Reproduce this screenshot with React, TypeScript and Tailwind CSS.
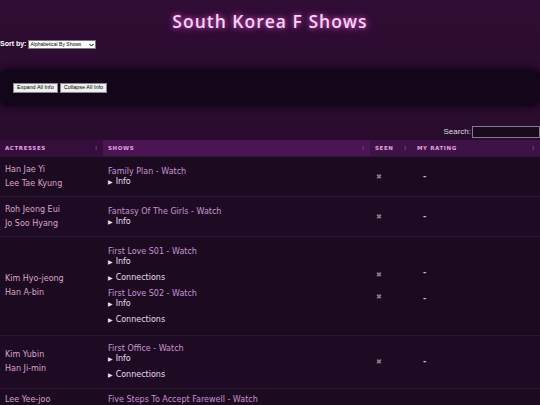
import React from "react";

type Show = { title: string; connections?: boolean };
type Row = { actresses: string[]; shows: Show[]; h: string; top?: boolean };

const rows: Row[] = [
  { actresses: ["Han Jae Yi", "Lee Tae Kyung"], shows: [{ title: "Family Plan" }], h: "h-[40px]" },
  { actresses: ["Roh Jeong Eui", "Jo Soo Hyang"], shows: [{ title: "Fantasy Of The Girls" }], h: "h-[40px]" },
  {
    actresses: ["Kim Hyo-jeong", "Han A-bin"],
    shows: [
      { title: "First Love S01", connections: true },
      { title: "First Love S02", connections: true },
    ],
    h: "h-[99px]",
  },
  { actresses: ["Kim Yubin", "Han Ji-min"], shows: [{ title: "First Office", connections: true }], h: "h-[53px]" },
  { actresses: ["Lee Yee-joo"], shows: [{ title: "Five Steps To Accept Farewell" }], h: "h-[56px]", top: true },
];

function SortIcon() {
  return <span className="text-[6px] leading-none text-[#7a4a80]">⁝</span>;
}

function Disclosure({ label }: { label: string }) {
  return (
    <div className="flex items-center gap-[3px] text-[8px] leading-[10px] text-[#eadcf0]">
      <span className="text-[6px]">▶</span>
      <span>{label}</span>
    </div>
  );
}

export default function App() {
  const font = { fontFamily: '"DejaVu Sans", Verdana, sans-serif' };
  const arial = { fontFamily: '"Liberation Sans", Arial, sans-serif' };
  return (
    <div
      className="w-[540px] h-[405px] overflow-hidden bg-gradient-to-b from-[#300d34] via-[#250b2a] to-[#1b0a1f]"
      style={font}
    >
      <h1
        className="pt-[8px] h-[36px] text-center text-[17.5px] font-semibold tracking-[1px] text-[#f4d4f0] [text-shadow:0_0_5px_#c048b8,0_0_10px_#8a2484]"
        style={{ fontFamily: '"Open Sans", "DejaVu Sans", sans-serif' }}
      >
        South Korea F Shows
      </h1>
      <div className="flex items-center gap-[2px] h-[17px]" style={arial}>
        <span className="text-[7px] font-bold text-white">Sort by:</span>
        <div className="relative flex">
          <select className="appearance-none h-[9px] w-[68px] bg-white text-black text-[5px] border border-[#777] pl-[1px] pr-[6px] leading-none">
            <option>Alphabetical By Shows</option>
          </select>
          <svg className="absolute right-[2px] top-[2.5px] w-[5px] h-[4px]" viewBox="0 0 10 8">
            <path d="M1 2 L5 6 L9 2" fill="none" stroke="#000" strokeWidth="2" />
          </svg>
        </div>
      </div>
      <div
        className="mt-[16px] h-[37px] rounded-[8px] bg-[#13061a] flex items-center px-[13px] gap-[2px] shadow-[0_0_8px_#0d0410]"
        style={arial}
      >
        <button className="h-[10px] px-[3px] bg-[#efefef] border border-[#888] text-[5.5px] text-black leading-none">Expand All Info</button>
        <button className="h-[10px] px-[3px] bg-[#efefef] border border-[#888] text-[5.5px] text-black leading-none">Collapse All Info</button>
      </div>
      <div className="flex justify-end items-center gap-[1px] mt-[19px] h-[13px]" style={arial}>
        <span className="text-[8px] text-[#ddd]">Search:</span>
        <input className="w-[68px] h-[12px] border border-[#8a7a90] bg-[#1a0a20]" />
      </div>
      <div className="mt-[2px] grid grid-cols-[103px_267px_42px_128px] h-[16px] text-[5.5px] font-bold tracking-[0.6px] text-[#e6a4e2] bg-[#360f3d]">
        <div className="flex items-center justify-between px-[5px] bg-[#350e3c]">ACTRESSES<SortIcon /></div>
        <div className="flex items-center justify-between px-[5px] bg-[#4b1554]">SHOWS<SortIcon /></div>
        <div className="flex items-center justify-between px-[5px] bg-[#3e1246]">SEEN<SortIcon /></div>
        <div className="flex items-center justify-between px-[5px] bg-[#3e1246]">MY RATING<SortIcon /></div>
      </div>
      {rows.map((r, i) => (
        <div
          key={i}
          className={`grid grid-cols-[103px_267px_42px_128px] border-t border-[#2e1436] ${r.h} ${i % 2 === 0 ? "bg-[#1c0a21]" : "bg-[#1e0b23]"}`}
        >
          <div
            className={`flex flex-col gap-[4px] px-[5px] text-[8px] leading-[10px] text-[#dba4cc] ${r.top ? "justify-start pt-[6px]" : "justify-center"}`}
          >
            {r.actresses.map((a) => (
              <div key={a}>{a}</div>
            ))}
          </div>
          <div className={`flex flex-col gap-[6px] px-[5px] ${r.top ? "justify-start pt-[6px]" : "justify-center"}`}>
            {r.shows.map((s) => (
              <div key={s.title} className="flex flex-col">
                <div className="text-[8px] leading-[10px] text-[#c993d4]">{s.title} - Watch</div>
                <Disclosure label="Info" />
                {s.connections && (
                  <div className="mt-[6px]">
                    <Disclosure label="Connections" />
                  </div>
                )}
              </div>
            ))}
          </div>
          <div className="flex flex-col justify-center gap-[14px] px-[6px] text-[7px] leading-[8px] text-[#8e7f92]">
            {r.shows.map((s) => (
              <div key={s.title}>✖</div>
            ))}
          </div>
          <div className="flex flex-col justify-center gap-[18px] px-[11px] text-[8px] leading-[8px] font-bold text-[#d4b8dc]">
            {r.shows.map((s) => (
              <div key={s.title}>-</div>
            ))}
          </div>
        </div>
      ))}
    </div>
  );
}
